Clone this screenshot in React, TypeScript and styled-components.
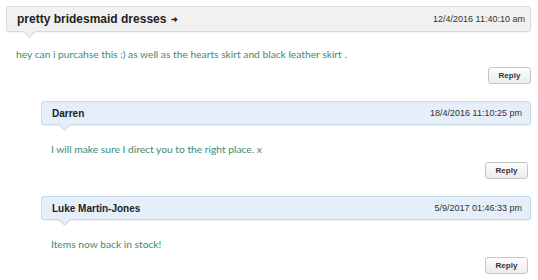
import React from "react";
import styled, { createGlobalStyle } from "styled-components";

const Global = createGlobalStyle`
  html, body { margin: 0; padding: 0; background: #fff; }
  body { width: 538px; height: 280px; overflow: hidden; }
`;

const Thread = styled.div`
  padding: 6px 7px 0 6px;
`;

const Comment = styled.div<{ $nested?: boolean }>`
  margin-left: ${(p) => (p.$nested ? "35px" : "0")};
`;

const Header = styled.div<{ $nested?: boolean }>`
  position: relative;
  display: flex;
  align-items: center;
  justify-content: space-between;
  height: ${(p) => (p.$nested ? "22px" : "24px")};
  padding: ${(p) => (p.$nested ? "0 8px 0 10px" : "0 5px 0 10px")};
  border: 1px solid ${(p) => (p.$nested ? "#c7d8ea" : "#dadada")};
  border-radius: 3px;
  background: ${(p) => (p.$nested ? "#e6eff9" : "#f1f1f1")};
  box-shadow: 0 1px 1px rgba(0, 0, 0, 0.05);
  &::after {
    content: "";
    position: absolute;
    left: 18px;
    bottom: -5px;
    width: 8px;
    height: 8px;
    background: ${(p) => (p.$nested ? "#e6eff9" : "#f1f1f1")};
    border-right: 1px solid ${(p) => (p.$nested ? "#c7d8ea" : "#dadada")};
    border-bottom: 1px solid ${(p) => (p.$nested ? "#c7d8ea" : "#dadada")};
    transform: rotate(45deg);
  }
`;

const Title = styled.span<{ $nested?: boolean }>`
  font-family: "Liberation Sans", Arial, sans-serif;
  font-weight: bold;
  font-size: ${(p) => (p.$nested ? "10px" : "12px")};
  color: #222;
`;

const Arrow = styled.span`
  font-size: 8px;
  margin-left: 5px;
  vertical-align: 1px;
`;

const Date = styled.span`
  font-family: "Liberation Sans", Arial, sans-serif;
  font-size: 9px;
  color: #333;
`;

const Body = styled.div<{ $nested?: boolean }>`
  padding: ${(p) => (p.$nested ? "17px" : "15px")} 10px 0 10px;
  height: 16px;
  font-family: Lato, "Comic Sans MS", sans-serif;
  font-size: 10.25px;
  line-height: 14px;
  color: #3d8b71;
`;

const Actions = styled.div<{ $nested?: boolean }>`
  display: flex;
  justify-content: flex-end;
  padding: ${(p) => (p.$nested ? "4px 3px 0 0" : "4px 0 0 0")};
  margin-bottom: 17px;
`;

const ReplyButton = styled.button`
  width: 43px;
  height: 17px;
  padding: 0;
  border: 1px solid #c6c6c6;
  border-radius: 3px;
  background: linear-gradient(#fefefe, #ebebeb);
  font-family: "Liberation Sans", Arial, sans-serif;
  font-weight: bold;
  font-size: 8px;
  color: #333;
`;

type Item = { title: string; date: string; text: string; nested?: boolean; arrow?: boolean };

const items: Item[] = [
  {
    title: "pretty bridesmaid dresses",
    date: "12/4/2016 11:40:10 am",
    text: "hey can i purcahse this :) as well as the hearts skirt and black leather skirt .",
    arrow: true,
  },
  { title: "Darren", date: "18/4/2016 11:10:25 pm", text: "I will make sure I direct you to the right place. x", nested: true },
  { title: "Luke Martin-Jones", date: "5/9/2017 01:46:33 pm", text: "Items now back in stock!", nested: true },
];

export default function App() {
  return (
    <>
      <Global />
      <Thread>
        {items.map((it, i) => (
          <Comment key={i} $nested={it.nested}>
            <Header $nested={it.nested}>
              <Title $nested={it.nested}>
                {it.title}
                {it.arrow && <Arrow>➜</Arrow>}
              </Title>
              <Date>{it.date}</Date>
            </Header>
            <Body $nested={it.nested}>{it.text}</Body>
            <Actions $nested={it.nested}>
              <ReplyButton>Reply</ReplyButton>
            </Actions>
          </Comment>
        ))}
      </Thread>
    </>
  );
}
